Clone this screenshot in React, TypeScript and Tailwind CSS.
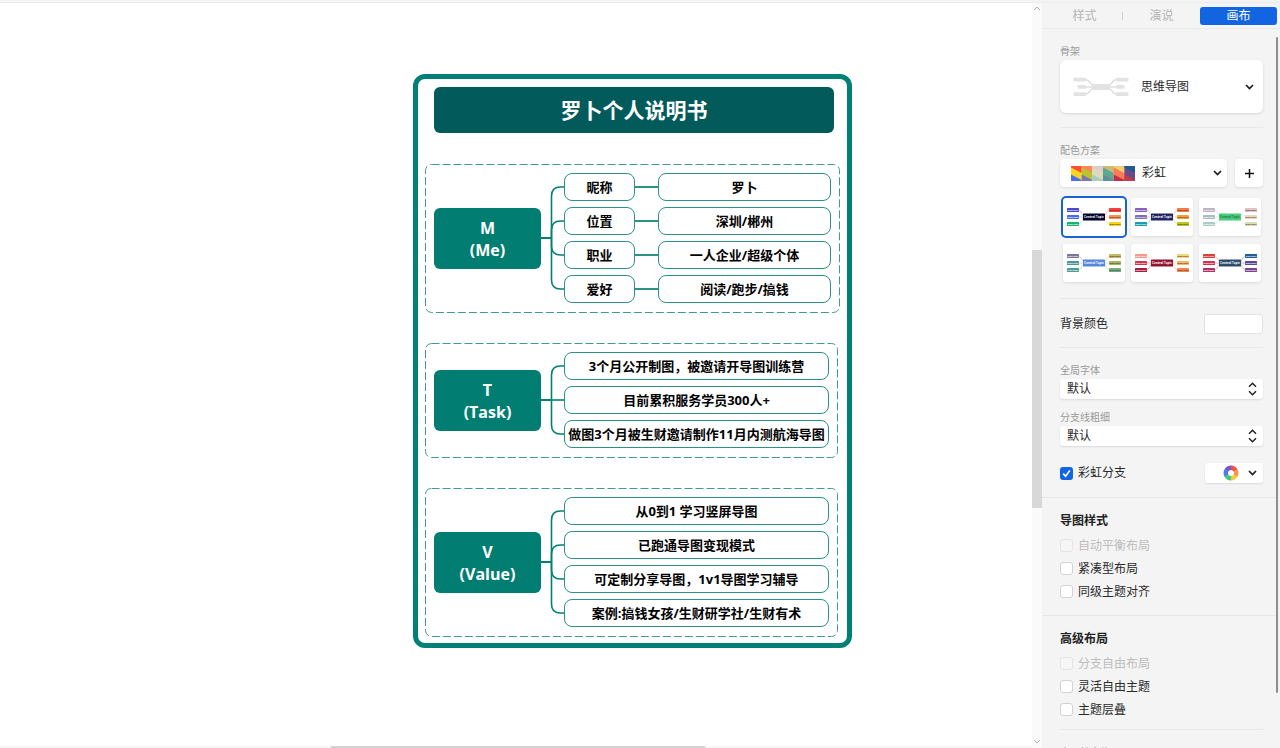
import type { ReactNode } from "react";

const CHECK_BOX =
  "size-[13px] shrink-0 appearance-none rounded-[3px] border border-[#d2d2d2] bg-white disabled:border-[#e4e4e4] disabled:bg-[#f6f6f6]";

type Row = { label: string; value?: string };

type Section = { letter: string; name: string; rows: Row[] };

const sections: Section[] = [
  {
    letter: "M",
    name: "(Me)",
    rows: [
      { label: "昵称", value: "罗卜" },
      { label: "位置", value: "深圳/郴州" },
      { label: "职业", value: "一人企业/超级个体" },
      { label: "爱好", value: "阅读/跑步/搞钱" },
    ],
  },
  {
    letter: "T",
    name: "(Task)",
    rows: [
      { label: "3个月公开制图，被邀请开导图训练营" },
      { label: "目前累积服务学员300人+" },
      { label: "做图3个月被生财邀请制作11月内测航海导图" },
    ],
  },
  {
    letter: "V",
    name: "(Value)",
    rows: [
      { label: "从0到1 学习竖屏导图" },
      { label: "已跑通导图变现模式" },
      { label: "可定制分享导图，1v1导图学习辅导" },
      { label: "案例:搞钱女孩/生财研学社/生财有术" },
    ],
  },
];

const ROW = 28;
const GAP = 6;

function Branches({ count }: { count: number }) {
  const height = count * ROW + (count - 1) * GAP;
  const mid = height / 2;
  return (
    <svg width="23" height={height} viewBox={`0 0 23 ${height}`} fill="none" stroke="#028075" strokeWidth="1.6" className="shrink-0">
      <path d={`M0 ${mid}H10.5`} strokeWidth="2" />
      {Array.from({ length: count }, (_, i) => {
        const y = ROW / 2 + i * (ROW + GAP);
        if (y === mid) return <path key={i} d={`M10 ${mid}H23`} />;
        const s = y < mid ? 1 : -1;
        return <path key={i} d={`M10.5 ${mid}V${y + 9 * s}Q10.5 ${y} 19.5 ${y}H23`} />;
      })}
    </svg>
  );
}

function Topic({ className, children }: { className: string; children: ReactNode }) {
  return (
    <div className={`flex h-7 items-center justify-center whitespace-nowrap rounded-lg border border-[#2c9186] bg-white pt-px text-[13px] font-bold text-black ${className}`}>
      {children}
    </div>
  );
}

function MapSection({ section }: { section: Section }) {
  return (
    <section className="relative flex w-fit items-center py-[9px] pl-[9px] pr-2">
      <svg className="absolute inset-0 h-full w-full overflow-visible" fill="none" stroke="#3f9a90" strokeDasharray="8 3">
        <rect x="0.5" y="0.5" width="100%" height="100%" rx="6" />
      </svg>
      <div className="flex h-[61px] w-[107px] flex-col items-center justify-center rounded-md bg-[#027d72] pt-px text-base font-bold leading-[22px] text-white">
        <span>{section.letter}</span>
        <span>{section.name}</span>
      </div>
      <Branches count={section.rows.length} />
      <div className="flex flex-col gap-1.5">
        {section.rows.map((row) =>
          row.value ? (
            <div key={row.label} className="flex items-center">
              <Topic className="w-[71px]">{row.label}</Topic>
              <div className="h-0.5 w-[23px] bg-[#2c9186]" />
              <Topic className="w-[173px]">{row.value}</Topic>
            </div>
          ) : (
            <Topic key={row.label} className="w-[265px]">
              {row.label}
            </Topic>
          ),
        )}
      </div>
    </section>
  );
}

function Chevron() {
  return (
    <svg width="9" height="6" viewBox="0 0 9 6" fill="none" stroke="#1c1c1c" strokeWidth="1.7" className="shrink-0">
      <path d="M1 1L4.5 4.5L8 1" />
    </svg>
  );
}

function Skeleton() {
  return (
    <svg width="57" height="20" viewBox="0 0 57 20" className="shrink-0">
      <g fill="none" stroke="#d2d2d2" strokeWidth="1.1">
        <path d="M13 2.5C19 2.5 17.5 9 23 9.5M13 17C19 17 17.5 11 23 10.5M13 10H23" />
        <path d="M45 2.5C39 2.5 40.5 9 35 9.5M45 17C39 17 40.5 11 35 10.5M45 10H35" />
      </g>
      <g fill="#e2e2e2">
        <rect x="1.5" y="0.8" width="12.5" height="3.6" rx="0.8" />
        <rect x="5.5" y="8.1" width="8.5" height="3.6" rx="0.8" />
        <rect x="1.5" y="15.3" width="12.5" height="3.6" rx="0.8" />
        <rect x="20.5" y="7" width="17" height="6" rx="1" />
        <rect x="44" y="0.8" width="12.5" height="3.6" rx="0.8" />
        <rect x="44" y="8.1" width="8.5" height="3.6" rx="0.8" />
        <rect x="44" y="15.3" width="12.5" height="3.6" rx="0.8" />
      </g>
    </svg>
  );
}

const strips = [
  ["#ff4b3a", "#f9d41c", "#4f6bf0"],
  ["#f98a55", "#b9c430", "#7b74b4"],
  ["#dccfcb", "#dfd9b8", "#a8ccc4"],
  ["#c8bb72", "#5fa793", "#5f8f9a"],
  ["#f0cf74", "#f97b52", "#c02d4c"],
  ["#1e5c93", "#6b4a8c", "#c43a48"],
];

function Rainbow() {
  return (
    <svg width="64" height="15" viewBox="0 0 66 15" preserveAspectRatio="none" className="shrink-0">
      {strips.map(([top, middle, bottom], i) => (
        <g key={top} transform={`translate(${i * 11} 0)`}>
          <rect width="11" height="15" fill={middle} />
          <path d="M0 0H11V7L0 1.5Z" fill={top} />
          <path d="M0 8.5L11 14V15H0Z" fill={bottom} />
        </g>
      ))}
    </svg>
  );
}

type Theme = { name: string; center: string; ink: string; left: string[]; right: string[] };

const themes: Theme[] = [
  { name: "主题 1", center: "#000229", ink: "#fff", left: ["#4a47c8", "#4c68ee", "#12b36c"], right: ["#fa423b", "#f6914f", "#f5d31f"] },
  { name: "主题 2", center: "#22245f", ink: "#fff", left: ["#8a62b8", "#7a70b4", "#1c9aae"], right: ["#f57a44", "#f7a030", "#b4c81e"] },
  { name: "主题 3", center: "#4bcb7d", ink: "#1d7a42", left: ["#bdb4c6", "#a9bfc8", "#a8cdc6"], right: ["#e2c3c3", "#ecd6bd", "#dbdcb4"] },
  { name: "主题 4", center: "#5487de", ink: "#fff", left: ["#77779c", "#4e969c", "#4d9c90"], right: ["#c6b866", "#a2b85e", "#72ae80"] },
  { name: "主题 5", center: "#92142f", ink: "#fff", left: ["#f59a86", "#d5344a", "#a81c3c"], right: ["#f0d67c", "#f6b866", "#f68650"] },
  { name: "主题 6", center: "#2b4d69", ink: "#fff", left: ["#d8433a", "#cf3350", "#b03068"], right: ["#1f5f98", "#5a4a94", "#7c4490"] },
];

function ThemePreview({ theme }: { theme: Theme }) {
  const ys = [10, 17, 24];
  return (
    <svg width="62" height="38" viewBox="0 0 62 38" aria-hidden="true">
      <g fill="none" strokeWidth="0.6">
        {ys.map((y, i) => (
          <g key={y}>
            <path d={`M15 ${y + 2}C19 ${y + 2} 19 19 23 19`} stroke={theme.left[i]} strokeOpacity="0.6" />
            <path d={`M47 ${y + 2}C43 ${y + 2} 43 19 39 19`} stroke={theme.right[i]} strokeOpacity="0.6" />
          </g>
        ))}
      </g>
      {ys.map((y, i) => (
        <g key={y} fontWeight="700" fontSize="2" textAnchor="middle">
          <rect x="4" y={y} width="12" height="4" rx="0.6" fill={theme.left[i]} />
          <rect x="46" y={y} width="12" height="4" rx="0.6" fill={theme.right[i]} />
          <text x="10" y={y + 2.7} fill="#fff">
            Main Topic
          </text>
          <text x="52" y={y + 2.7} fill={theme.name === "主题 6" ? "#fff" : "#5a3030"}>
            Main Topic
          </text>
        </g>
      ))}
      <rect x="20" y="15.5" width="22" height="7" rx="0.6" fill={theme.center} />
      <text x="31" y="20" fontSize="3" fontWeight="700" textAnchor="middle" fill={theme.ink}>
        Central Topic
      </text>
    </svg>
  );
}

function ColorWheel() {
  const colors = ["#f0524a", "#f7934a", "#f7c83c", "#3fc97c", "#4a7de8", "#7a56c8"];
  return (
    <svg width="16" height="16" viewBox="0 0 16 16" className="shrink-0">
      {colors.map((c, i) => (
        <circle key={c} cx="8" cy="8" r="5.2" fill="none" stroke={c} strokeWidth="4.4" pathLength="6" strokeDasharray="1.02 4.98" transform={`rotate(${i * 60 - 90} 8 8)`} />
      ))}
    </svg>
  );
}

function UpDown() {
  return (
    <svg width="9" height="14" viewBox="0 0 9 14" fill="none" stroke="#222" strokeWidth="1.5" className="pointer-events-none col-start-1 row-start-1 mr-1.5 self-center justify-self-end">
      <path d="M1 4.8L4.5 1.3L8 4.8M1 9.2L4.5 12.7L8 9.2" />
    </svg>
  );
}

function SelectField({ id, label }: { id: string; label: string }) {
  return (
    <div>
      <label htmlFor={id} className="block text-[10px] leading-[18px] text-[#9a9a9a]">
        {label}
      </label>
      <div className="grid">
        <select id={id} className="col-start-1 row-start-1 h-5 w-full appearance-none rounded-[3px] bg-white pl-[7px] text-xs leading-5 text-[#2a2a2a] shadow-[0_1px_2px_#0000001c]">
          <option>默认</option>
        </select>
        <UpDown />
      </div>
    </div>
  );
}

function Check({ id, label, disabled }: { id: string; label: string; disabled?: boolean }) {
  return (
    <div className="flex h-[23px] items-center gap-[5px]">
      <input id={id} type="checkbox" disabled={disabled} className={CHECK_BOX} />
      <label htmlFor={id} className={disabled ? "text-xs text-[#bdbdbd]" : "text-xs text-[#2a2a2a]"}>
        {label}
      </label>
    </div>
  );
}

function Arrow({ up }: { up?: boolean }) {
  return (
    <svg width="8" height="5" viewBox="0 0 8 5" fill="none" stroke="#b0b0b0" className="shrink-0">
      <path d={up ? "M1 4L4 1L7 4" : "M1 1L4 4L7 1"} />
    </svg>
  );
}

function Panel() {
  return (
    <aside className="flex min-h-0 w-[238px] shrink-0 flex-col bg-[#f4f4f4]">
      <nav className="flex h-[26px] shrink-0 items-center border-b border-[#e9e9e9] pl-1 pr-[3px] pt-px text-xs">
        <button className="flex-1 text-[#b4b4b4]">样式</button>
        <span className="-ml-px h-2 w-px bg-[#cfcfcf]" />
        <button className="flex-1 text-[#b4b4b4]">演说</button>
        <button className="h-[18px] flex-1 rounded-[3px] bg-[#1264e0] text-white">画布</button>
      </nav>
      <div className="flex min-h-0 flex-1">
        <div className="min-w-0 flex-1 overflow-hidden">
          <div className="pl-[18px] pr-[13px]">
            <div className="border-b border-[#e8e8e8] pb-[14px] pt-[13px]">
              <h3 className="text-[10px] leading-[18px] text-[#9a9a9a]">骨架</h3>
              <button className="flex h-[53px] w-full items-center rounded-md bg-white pl-3 pr-[9px] text-xs text-[#2a2a2a] shadow-[0_1px_3px_#00000020]">
                <Skeleton />
                <span className="ml-3 flex-1 text-left">思维导图</span>
                <Chevron />
              </button>
            </div>

            <div className="border-b border-[#e8e8e8] pb-4 pt-[13px]">
              <h3 className="text-[10px] leading-[18px] text-[#9a9a9a]">配色方案</h3>
              <div className="flex gap-2">
                <button className="flex h-7 flex-1 items-center rounded-[4px] bg-white pl-[11px] pr-[5px] text-xs text-[#2a2a2a] shadow-[0_1px_3px_#0000001c]">
                  <Rainbow />
                  <span className="ml-[7px] flex-1 text-left">彩虹</span>
                  <Chevron />
                </button>
                <button aria-label="添加" className="flex size-7 items-center justify-center rounded-[4px] bg-white shadow-[0_1px_3px_#0000001c]">
                  <svg width="9" height="9" viewBox="0 0 9 9" stroke="#111" strokeWidth="1.5">
                    <path d="M0 4.5H9M4.5 0V9" />
                  </svg>
                </button>
              </div>
              <div className="mt-[11px] grid grid-cols-[62px_62px_62px] gap-x-1.5 gap-y-2 pl-[3px]">
                {themes.map((theme, i) => (
                  <button
                    key={theme.name}
                    aria-label={theme.name}
                    className={
                      i === 0
                        ? "h-[38px] rounded-[3px] bg-white ring-2 ring-[#1a62d0]"
                        : "h-[38px] rounded-[3px] bg-white shadow-[0_1px_3px_#0000001c]"
                    }
                  >
                    <ThemePreview theme={theme} />
                  </button>
                ))}
              </div>
            </div>

            <div className="flex h-[49px] items-center justify-between border-b border-[#e8e8e8] pt-px">
              <label htmlFor="bg-color" className="text-xs text-[#2a2a2a]">
                背景颜色
              </label>
              <button id="bg-color" className="h-5 w-[59px] rounded-[3px] border border-[#e2e2e2] bg-white" />
            </div>

            <div className="flex flex-col gap-[9px] pt-[13px]">
              <SelectField id="font" label="全局字体" />
              <SelectField id="line" label="分支线粗细" />
            </div>

            <div className="mb-[14px] mt-[17px] flex h-5 items-center gap-[5px]">
              <span className="grid">
                <input id="rainbow" type="checkbox" defaultChecked className="col-start-1 row-start-1 size-[13px] appearance-none rounded-[3px] bg-[#1264e0]" />
                <svg width="13" height="13" viewBox="0 0 13 13" fill="none" stroke="#fff" strokeWidth="1.6" className="pointer-events-none col-start-1 row-start-1">
                  <path d="M3.2 6.6L5.6 9.2L9.8 3.6" />
                </svg>
              </span>
              <label htmlFor="rainbow" className="flex-1 text-xs text-[#2a2a2a]">
                彩虹分支
              </label>
              <button aria-label="分支颜色" className="flex h-5 w-[58px] items-center justify-end gap-[9px] rounded-[3px] bg-white pr-1.5 shadow-[0_1px_2px_#0000001c]">
                <ColorWheel />
                <Chevron />
              </button>
            </div>
          </div>

          <div className="border-t border-[#e8e8e8] pb-3 pl-[18px] pt-[14px]">
            <h3 className="pb-1 text-xs font-bold leading-[18px] text-[#222]">导图样式</h3>
            <Check id="balance" label="自动平衡布局" disabled />
            <Check id="compact" label="紧凑型布局" />
            <Check id="align" label="同级主题对齐" />
          </div>

          <div className="border-t border-[#e8e8e8] pl-[18px] pr-[13px] pt-[14px]">
            <h3 className="pb-1 text-xs font-bold leading-[18px] text-[#222]">高级布局</h3>
            <Check id="free" label="分支自由布局" disabled />
            <Check id="flex" label="灵活自由主题" />
            <Check id="overlap" label="主题层叠" />
            <div className="mt-2 border-t border-[#e8e8e8] pt-[13px]">
              <h3 className="text-[10px] leading-[18px] text-[#9a9a9a]">中日韩字体</h3>
            </div>
          </div>
        </div>
        <div className="w-1 shrink-0 pb-[55px] pr-0.5 pt-2">
          <div className="h-full rounded-full bg-[#8e8e8e]" />
        </div>
      </div>
    </aside>
  );
}

export default function App() {
  return (
    <div className="flex h-screen flex-col overflow-hidden bg-[#f4f4f4] font-['Open_Sans','Noto_Sans_CJK_SC',sans-serif]">
      <div className="h-[3px] shrink-0 border-b border-[#ececec]" />
      <div className="flex min-h-0 flex-1">
        <div className="flex min-w-0 flex-1 flex-col">
          <main className="min-h-0 flex-1 overflow-hidden bg-white pl-[413px] pt-[71px]">
            <div className="w-[439px] rounded-xl border-[5px] border-[#028075] px-[7px] pb-[7px] pt-2">
              <h1 className="mx-[9px] flex h-[46px] w-[400px] items-center justify-center rounded-md bg-[#025b5a] pt-px text-[21px] font-bold text-white">
                罗卜个人说明书
              </h1>
              <div className="mt-[31px] flex flex-col gap-[31px]">
                {sections.map((section) => (
                  <MapSection key={section.letter} section={section} />
                ))}
              </div>
            </div>
          </main>
          <div className="flex h-0.5 shrink-0 bg-[#f6f6f6]">
            <div className="flex-[331]" />
            <div className="flex-[374] bg-[#d2d2d2]" />
            <div className="flex-[327]" />
          </div>
        </div>
        <div className="flex w-[10px] shrink-0 flex-col items-center bg-[#fafafa] pb-1 pt-[3px]">
          <Arrow up />
          <div className="flex w-full flex-1 flex-col">
            <div className="flex-[239]" />
            <div className="flex-[258] bg-[#d8d8d8]" />
            <div className="flex-[231]" />
          </div>
          <Arrow />
        </div>
        <Panel />
      </div>
    </div>
  );
}
